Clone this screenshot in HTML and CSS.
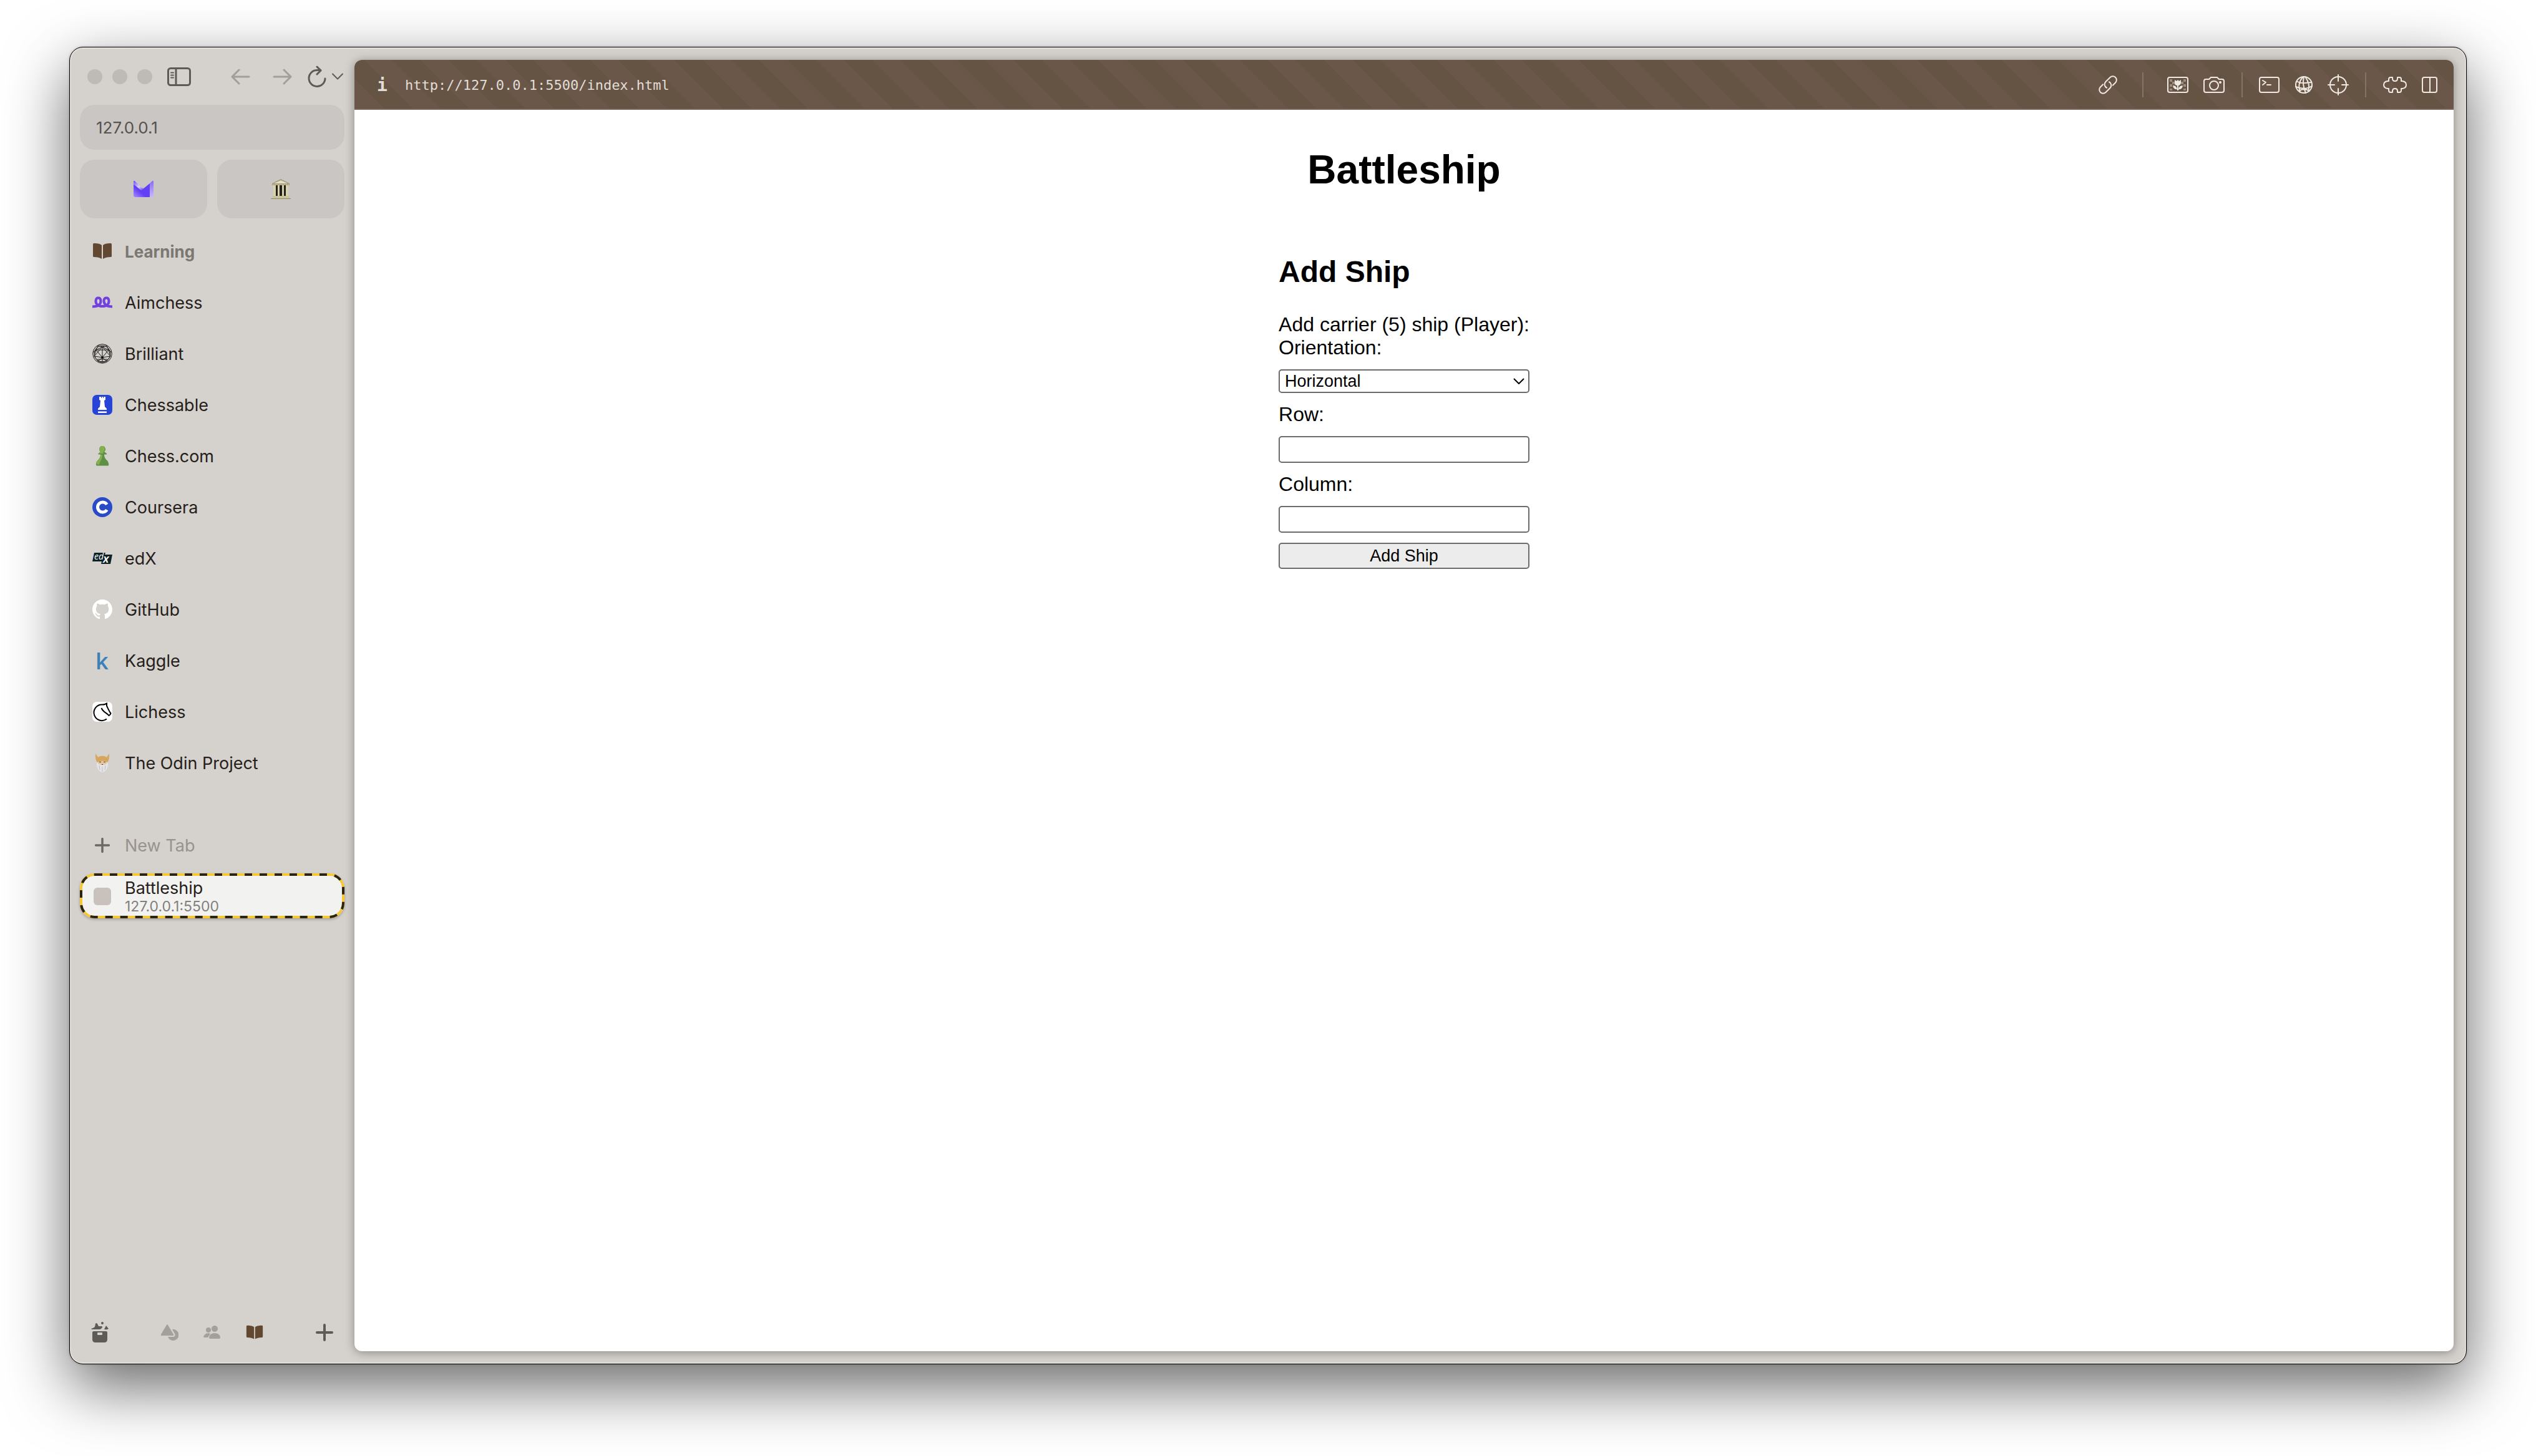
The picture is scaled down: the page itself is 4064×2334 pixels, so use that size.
FILE: index.html
```html
<!DOCTYPE html>
<html lang="en">
<head>
<meta charset="utf-8">
<title>Battleship</title>
<link rel="stylesheet" href="styles.css">
</head>
<body>
<svg class="sprite" aria-hidden="true">
  <symbol id="book" viewBox="0 0 32 32">
    <path d="M1 5c0-2 1-2 3-2 5 0 9 1 11 3v22c-3-2-7-3-12-3-1 0-2 0-2-2z"/>
    <path d="M31 5c0-2-1-2-3-2-5 0-9 1-11 3v22c3-2 7-3 12-3 1 0 2 0 2-2z"/>
  </symbol>
  <symbol id="plus" viewBox="0 0 28 28">
    <path d="M14 2v24M2 14h24" fill="none" stroke="currentColor" stroke-width="4" stroke-linecap="round"/>
  </symbol>
</svg>
<div class="window">
  <aside class="sidebar">
    <div class="controls">
      <div class="lights"><i></i><i></i><i></i></div>
      <button class="tool toggle" aria-label="Toggle sidebar"><svg width="38" height="30" viewBox="0 0 38 30"><rect x="1.500" y="1.500" width="35" height="27" rx="4"/><path d="M14 2v26"/><path d="M6 8.500h4M6 12.500h4M6 16.500h4" stroke-width="2"/></svg></button>
      <button class="tool dim back" aria-label="Back"><svg width="32" height="26" viewBox="0 0 32 26"><path d="M14 2L3 13l11 11M3 13h27"/></svg></button>
      <button class="tool dim forward" aria-label="Forward"><svg width="32" height="26" viewBox="0 0 32 26"><path d="M18 2l11 11-11 11M29 13H2"/></svg></button>
      <button class="tool" aria-label="Reload"><svg width="30" height="36" viewBox="0 0 30 36"><path d="M28 21a13 13 0 1 1-13-13.500h6M15 2l6 6-6 6"/></svg></button>
      <button class="tool more" aria-label="More"><svg width="20" height="12" viewBox="0 0 20 12"><path d="M2 1.500l8 8 8-8" stroke-width="2"/></svg></button>
    </div>
    <input class="address" type="text" value="127.0.0.1" aria-label="Address">
    <div class="tiles">
      <a class="tile" href="#" aria-label="Mail"><svg width="32" height="28" viewBox="0 0 32 28">
        <defs><linearGradient id="m1" x1="0" y1="1" x2="1" y2="0"><stop offset="0" stop-color="#a98cff"/><stop offset=".4" stop-color="#6440f5"/></linearGradient><linearGradient id="m2" x1="0" y1="0" x2="1" y2="1"><stop offset="0" stop-color="#6d4af7"/><stop offset=".6" stop-color="#dcd0ff"/><stop offset="1" stop-color="#6440f5"/></linearGradient><linearGradient id="m3" x1="0" y1="0" x2="0" y2="1"><stop offset="0" stop-color="#8a6cf5"/><stop offset="1" stop-color="#c9b8ff"/></linearGradient></defs>
        <path d="M0 6l11 9q2 1 4-1L26 5v22H3q-3 0-3-3z" fill="url(#m1)"/><path d="M0 2q0-2 2-1l11 11q1 1 3 0l-1 2q-2 2-4 1L0 6z" fill="url(#m2)"/><path d="M26 5l4-4q2-1 2 1v22q0 3-3 3h-3z" fill="url(#m3)"/></svg></a>
      <a class="tile" href="#" aria-label="Archive"><svg width="32" height="32" viewBox="0 0 32 32">
        <path d="M16 0L30 7v3H2V7z" fill="#a39c76"/><path d="M16 2l11 5H5z" fill="#e4dfc4"/><path d="M4 10h24v18H4z" fill="#24221c"/><path d="M4 10h4v17H4zM11 10h3v17h-3zM18 10h3v17h-3zM24 10h4v17h-4z" fill="#d8d2ac"/><path d="M3 27h26l3 5H0z" fill="#c9c39b"/><path d="M0 31.500h32" stroke="#8d8763"/><path d="M3 9h26" stroke="#d8d2ac" stroke-dasharray="2 1"/></svg></a>
    </div>
    <nav class="links">
      <h2 class="row group"><svg class="icon" width="32" height="32" fill="#624830"><use href="#book"/></svg>Learning</h2>
      <a class="row" href="#"><svg class="icon" viewBox="0 0 32 32"><g fill="none" stroke="#7340e0" stroke-width="4"><path d="M0 22.500c5 0 9-1 11-3 4-4 3-11-1.500-11S4 16 8 19.500c2 2 5 2.500 8 2.500s6-.5 8-2.500c4-3.500 3-11-1.500-11S17 15 21 19.500c2 2 6 3 11 3"/></g></svg>Aimchess</a>
      <a class="row" href="#"><svg class="icon" viewBox="0 0 32 32"><g fill="none" stroke="#1b1b1b" stroke-width="1"><circle cx="16" cy="16" r="15.300"/><circle cx="16" cy="16" r="13"/><path d="M6 10h20M6 10l10 12 10-12M3 20l13 2 13-2M3 20L16 5l13 15M6 10L3 20l6 8 7-6 7 6 6-8-3-10M6 10L16 5l10 5M9 28l7 2 7-2M16 5v25M1 14l5-4 3-7 7 2 7-2 3 7 5 4M8 25h16"/></g><circle cx="16" cy="22" r="1.800"/></svg>Brilliant</a>
      <a class="row" href="#"><svg class="icon" viewBox="0 0 32 32"><rect width="32" height="32" rx="7" fill="#2744d6"/><path fill="#fff" d="M11 3h3v2h1V3h2v2h1V3h3v5l-2 1 1 10 3 3v2H9v-2l3-3 1-10-2-1zM9 26.500h14v2.500H9z"/></svg>Chessable</a>
      <a class="row" href="#"><svg class="icon" viewBox="0 0 32 32"><path fill="#5d9044" d="M16 0a5 5 0 0 1 3 9l4 3v1.500h-4c0 5 2 7 5 10 2 2 3 8 1.500 8H7c-2-1-1-6 1-8 3-3 5-5 5-10H9.500V12l3.500-3a5 5 0 0 1 3-9z"/><path fill="#85b04f" d="M16 0a5 5 0 0 0-3 9l-3 3h8l-1-2c4-2 4-10-1-10zM13 14h3c0 8-4 9-5 16l-4-1c-1-3 1-5 2-6 3-3 4-5 4-9z"/></svg>Chess.com</a>
      <a class="row" href="#"><svg class="icon" viewBox="0 0 32 32"><circle cx="16" cy="16" r="16" fill="#2a4bc8"/><path d="M23.300 11.800a8 8 0 1 0 0 8.400" fill="none" stroke="#fff" stroke-width="5"/></svg>Coursera</a>
      <a class="row" href="#"><svg class="icon" viewBox="0 0 32 32"><path fill="#0d2226" d="M3 7h18l-1 3h12l-3 15H14l1-4H0z"/><text x="3" y="18" class="logo-ed">ed</text><text x="17" y="23" class="logo-x">X</text></svg>edX</a>
      <a class="row" href="#"><svg class="icon" viewBox="0 0 16 16"><path fill="#fff" d="M8 0C3.580 0 0 3.580 0 8c0 3.540 2.290 6.530 5.470 7.590.4.070.55-.17.55-.38 0-.19-.01-.82-.01-1.490-2.010.37-2.530-.49-2.690-.94-.09-.23-.48-.94-.82-1.130-.28-.15-.68-.52-.01-.53.63-.01 1.080.58 1.230.82.72 1.210 1.870.87 2.330.66.07-.52.28-.87.51-1.070-1.780-.2-3.640-.89-3.640-3.950 0-.87.31-1.590.82-2.150-.08-.2-.36-1.020.08-2.120 0 0 .67-.21 2.200.82.64-.18 1.320-.27 2-.27s1.360.09 2 .27c1.530-1.040 2.200-.82 2.200-.82.44 1.100.16 1.920.08 2.120.51.56.82 1.270.82 2.150 0 3.070-1.870 3.750-3.650 3.950.29.25.54.73.54 1.480 0 1.070-.01 1.930-.01 2.200 0 .21.15.46.55.38A8.010 8.010 0 0 0 16 8c0-4.420-3.580-8-8-8z"/></svg>GitHub</a>
      <a class="row" href="#"><svg class="icon" viewBox="0 0 32 32"><text x="5" y="30" class="logo-k">k</text></svg>Kaggle</a>
      <a class="row" href="#"><svg class="icon" viewBox="0 0 32 32"><rect width="32" height="32" rx="7" fill="#fff"/><path d="M23 27.500A12.800 12.800 0 1 1 16 4.500c2 0 3 0 4-.5l3-1.500 0 4c2 4 4 9 6.500 12-.5 2-1.500 3-3 3.500-3-4-9-5-12-12" fill="none" stroke="#000" stroke-width="2"/></svg>Lichess</a>
      <a class="row" href="#"><svg class="icon" viewBox="0 0 32 32"><path fill="#e4e4e6" d="M7 16l4-2h10l4 2c1 8-4 15-9 15S6 24 7 16z"/><path fill="#e8c49a" d="M9 13h14v4l-4 2h-6l-4-2z"/><path fill="#d5a65c" d="M5 1c2 3 3 4 4 6 4-3 10-3 14 0 1-2 2-3 4-6 0 6 0 11-3 14-5-3-11-3-16 0C5 12 5 7 5 1z"/><path fill="#3c3c4a" d="M11 14h3v1h-3zM18 14h3v1h-3zM15 18h2v1h-2z"/><path d="M11 20l1 7M16 22v8M21 20l-1 7" stroke="#bdbdc1" fill="none"/></svg>The Odin Project</a>
    </nav>
    <div class="tabs">
      <button class="row new"><svg class="icon" viewBox="-2 -2 32 32"><use href="#plus" width="28" height="28"/></svg>New Tab</button>
      <a class="row active" href="#">
        <svg class="dashes" aria-hidden="true"><rect class="dash-base"/><rect class="dash-over"/></svg>
        <i class="favicon"></i><span class="label">Battleship<small>127.0.0.1:5500</small></span></a>
    </div>
    <footer class="dock">
      <button class="tool" aria-label="Archive"><svg width="28" height="34" viewBox="0 0 28 34"><path class="solid" d="M0 11q4-1 6-3l1-5q1-2 3 0l2 4h5q2 1 0 3-1 2-4 2H1zM21 12l3-6 4 5q-3 2-7 1z"/><circle class="solid" cx="18" cy="2" r="2"/><path class="solid" fill-rule="evenodd" d="M2 17q0-2 2-2h20q2 0 2 2v11q0 5-5 5H7q-5 0-5-5zM10 18v2q0 1 1 1h6q1 0 1-1v-2q0-1-1-1h-6q-1 0-1 1z"/></svg></button>
      <div class="spaces">
        <button class="tool space" aria-label="Space one"><svg width="28" height="26" viewBox="0 0 28 26"><path class="solid" d="M9 1q1-2 2 0l9 15q1 2-1 2H1q-2 0-1-2z"/><path class="solid" d="M18 8a9 9 0 1 1-7 12h9q4-1 2-5z"/></svg></button>
        <button class="tool space" aria-label="Space two"><svg width="28" height="22" viewBox="0 0 28 22"><circle class="solid" cx="8" cy="7" r="4"/><circle class="solid" cx="18" cy="5" r="5"/><path class="solid" d="M0 18q2-6 8-6l3 1-4 6H2q-2 0-2-1zM9 19q1-7 9-7t9 7q0 2-2 2H11q-2 0-2-2z"/></svg></button>
        <button class="tool space" aria-label="Learning"><svg width="28" height="28" class="solid brown"><use href="#book"/></svg></button>
      </div>
      <button class="tool" aria-label="New"><svg width="28" height="28"><use href="#plus"/></svg></button>
    </footer>
  </aside>
  <main class="panel">
    <header class="toolbar">
      <b class="info">i</b>
      <span class="url">http://127.0.0.1:5500/index.html</span>
      <div class="actions">
        <button class="tool" aria-label="Copy link"><svg width="36" height="36" viewBox="-18 -18 36 36"><g transform="rotate(45)"><path id="ring" d="M6-5v-6a6 6 0 0 0-12 0V-1a6 6 0 0 0 8 5.700"/><use href="#ring" transform="rotate(180)"/></g></svg></button>
        <hr class="wide">
        <div class="set">
          <button class="tool" aria-label="Image"><svg width="36" height="30" viewBox="0 0 36 30"><rect x="2" y="3" width="32" height="24" rx="3"/><path class="check" d="M5 6h4v4H5zM5 14h4v4H5zM9 10h4v4H9zM5 21h4v3H5zM27 6h4v4h-4zM27 14h4v4h-4zM23 10h4v4h-4zM27 21h4v3h-4z"/><path class="solid" d="M13 7l3 2 2-2 2 2 3-2v5q-1 4-4 4v8h-2v-8q-4 0-4-4zM10 16q6 0 7 6-6 1-7-6zM26 16q-6 0-7 6 6 1 7-6z"/></svg></button>
          <button class="tool" aria-label="Capture"><svg width="36" height="30" viewBox="0 0 36 30"><path d="M5 6h5l3-3h10l3 3h5q3 0 3 3v15q0 3-3 3H5q-3 0-3-3V9q0-3 3-3z"/><circle cx="18" cy="16" r="7"/><circle class="solid" cx="28" cy="11" r="2"/></svg></button>
        </div>
        <hr>
        <div class="set">
          <button class="tool" aria-label="Console"><svg width="34" height="30" viewBox="0 0 34 30"><rect x="1" y="3" width="31" height="24" rx="3"/><path d="M6 8l5 3-5 4M13 15h6"/></svg></button>
          <button class="tool" aria-label="Network"><svg width="32" height="32" viewBox="0 0 32 32"><circle cx="16" cy="16" r="13"/><path d="M15 3Q5 13 10 28M16 3q-3 13 3 26M18 3q9 12 5 24M5 10q4 5 23 2M3 19q14 6 26-1M8 26q8-6 17 0"/></svg></button>
          <button class="tool" aria-label="Inspect"><svg width="34" height="34" viewBox="0 0 34 34"><circle cx="17" cy="17" r="13"/><path d="M17 1v10M17 23v10M1 17h10M23 17h10"/></svg></button>
        </div>
        <hr>
        <div class="set">
          <button class="tool" aria-label="Extensions"><svg width="40" height="30" viewBox="0 0 40 30"><path d="M10 9V6q0-3 3-3h3v2q0 4 4 4t4-4V3h3q3 0 3 3v3h2q6 1 6 6t-6 6h-2v3q0 3-3 3h-3v-2q0-4-4-4t-4 4v2h-3q-3 0-3-3v-3H8q-6-1-6-6t6-6z"/></svg></button>
          <button class="tool" aria-label="Split view"><svg width="28" height="30" viewBox="0 0 28 30"><rect x="2" y="3" width="23" height="24" rx="3"/><path d="M14 3v24"/></svg></button>
        </div>
      </div>
    </header>
    <div class="page">
      <h1>Battleship</h1>
      <section class="game">
        <h2>Add Ship</h2>
        <form class="form">
          <p>Add carrier (5) ship (Player):<br><label for="orientation">Orientation:</label></p>
          <span class="select"><select id="orientation"><option>Horizontal</option><option>Vertical</option></select><svg width="18" height="10" viewBox="0 0 18 10"><path d="M1 1l8 8 8-8" fill="none" stroke="#000" stroke-width="2"/></svg></span>
          <label for="row">Row:</label>
          <input id="row" type="text">
          <label for="column">Column:</label>
          <input id="column" type="text">
          <button type="button">Add Ship</button>
        </form>
      </section>
    </div>
  </main>
</div>
</body>
</html>
```
FILE: styles.css
```css
* { box-sizing: border-box; }

body {
  margin: 0;
  height: 100vh;
  padding: 75px 111px 147px;
  background: #fff;
  font-family: Inter, "Liberation Sans", sans-serif;
  overflow: hidden;
}

.sprite { position: absolute; width: 0; height: 0; }

button { font: inherit; color: inherit; background: none; border: 0; padding: 0; }
a { color: inherit; text-decoration: none; }

.window {
  display: flex;
  height: 100%;
  padding: 20px;
  padding-left: 16px;
  border: 1px solid #000;
  border-radius: 22px;
  background: #d5d1cc;
  box-shadow: inset 0 0 0 2px #e2dfdb, 0 36px 100px rgba(0, 0, 0, .6), 0 0 4px rgba(0, 0, 0, .2);
}

/* Sidebar */
.sidebar {
  display: flex;
  flex-direction: column;
  flex: none;
  width: 424px;
  margin-right: 16px;
  color: #25201b;
  font-size: 27px;
}

.tool { display: flex; align-items: center; justify-content: center; color: #5d5b58; }
.tool svg { fill: none; stroke: currentColor; stroke-width: 3; stroke-linecap: round; stroke-linejoin: round; }
.tool .solid, .tool svg.solid { fill: currentColor; stroke: none; }
.tool svg.brown { color: #624830; }

.controls { display: flex; align-items: center; height: 54px; margin-bottom: 18px; padding-left: 12px; }
.lights { display: flex; gap: 16px; }
.lights i { width: 24px; height: 24px; border-radius: 50%; background: #bebab6; }
.toggle { margin-left: 24px; }
.tool.dim { color: #a29e9a; }
.back { margin-left: auto; margin-right: 36px; }
.forward { margin-right: 24px; }
.more { margin: 0 1px 0 8px; }

.address {
  height: 72px;
  padding: 0 26px;
  border: 0;
  border-radius: 24px;
  background: #cac6c3;
  color: #55524f;
  font: inherit;
  font-size: 26px;
}

.tiles { display: grid; grid-template-columns: 1fr 1fr; gap: 16px; margin: 16px 0; }
.tile { display: flex; align-items: center; justify-content: center; height: 94px; border-radius: 24px; background: #cac6c3; }

.links, .tabs { display: flex; flex-direction: column; gap: 10px; }
.tabs { margin-top: 60px; }
.row { display: flex; align-items: center; gap: 20px; height: 72px; padding: 2px 0 0 20px; margin: 0; text-align: left; }
.icon { flex: none; width: 32px; height: 32px; overflow: visible; }
.group { color: #7b7773; font-size: 26px; font-weight: 700; }
.new { color: #97938f; }
.new svg { color: #6b6966; padding: 2px; }
.logo-ed { font: italic 14px "Open Sans", sans-serif; fill: #fff; }
.logo-x { font: italic bold 15px "Open Sans", sans-serif; fill: #fff; }
.logo-k { font: 600 36px "Open Sans", sans-serif; fill: #3a80b9; }

.active { position: relative; border-radius: 24px; background: #f2f2f0; box-shadow: 0 2px 4px rgba(0, 0, 0, .25); }
.dashes { position: absolute; inset: 0; width: 100%; height: 100%; }
.dashes rect { x: 2px; y: 2px; width: calc(100% - 4px); height: calc(100% - 4px); rx: 22px; fill: none; stroke-width: 4px; }
.dash-base { stroke: #f6c836; }
.dash-over { stroke: #2c240e; stroke-dasharray: 12px 12px; }
.favicon { width: 28px; height: 28px; margin: 0 2px; border-radius: 6px; background: #c9c1bc; }
.label { line-height: 32px; }
.label small { display: block; color: #82807d; font-size: 23px; line-height: 26px; }

.dock { display: flex; align-items: center; justify-content: space-between; margin-top: auto; height: 60px; padding: 0 18px; }
.spaces { display: flex; gap: 40px; }
.tool.space { color: #a39f9b; }

/* Page panel */
.panel {
  display: flex;
  flex-direction: column;
  flex: 1;
  border-radius: 12px;
  background: #fff;
  overflow: hidden;
  box-shadow: 0 2px 16px rgba(0, 0, 0, .35);
}

.toolbar {
  display: flex;
  align-items: center;
  height: 80px;
  padding: 2px 24px 0 36px;
  border-bottom: 2px solid #76645a;
  background: repeating-linear-gradient(225deg, #655443 0 32px, #6a5749 32px 64px);
  color: #e2dcd6;
}
.toolbar .tool { color: #efe9e2; }
.toolbar .tool svg { stroke-width: 2; }
.toolbar .check { fill: #9b8d81; stroke: none; }
.info { width: 45px; font: bold 28px "DejaVu Sans Mono", monospace; }
.url { font: 22px "DejaVu Sans Mono", monospace; }
.actions { display: flex; align-items: center; gap: 26px; margin-left: auto; }
.actions hr { width: 2px; height: 40px; margin: 0; border: 0; background: #857466; }
.actions .wide { margin: 0 11px; }
.set { display: flex; align-items: center; gap: 22px; }

.page { display: flex; flex-direction: column; padding: 16px; color: #000; font: 32px "Liberation Sans", Arial, sans-serif; }
.page h1 { margin: 43px 0; font-size: 64px; line-height: 74px; text-align: center; }
.game { display: flex; flex-direction: column; align-self: center; padding: 16px 0; }
.game h2 { margin: 40px 0 39px; font-size: 48px; line-height: 55px; }
.form { display: flex; flex-direction: column; gap: 16px; line-height: 37px; }
.form p { margin: 0; }
.form input, .form select, .form button {
  width: 100%;
  height: 43px;
  border: 2px solid #6b6b6b;
  border-radius: 5px;
  background: #fff;
  color: #000;
  font: 27px "Liberation Sans", Arial, sans-serif;
}
.form button { height: 42px; background: #ececec; }
.form .select { display: grid; align-items: center; }
.form .select > * { grid-area: 1 / 1; }
.form select { height: 38px; padding: 0 8px; appearance: none; }
.form .select svg { justify-self: end; margin-right: 8px; }
```
